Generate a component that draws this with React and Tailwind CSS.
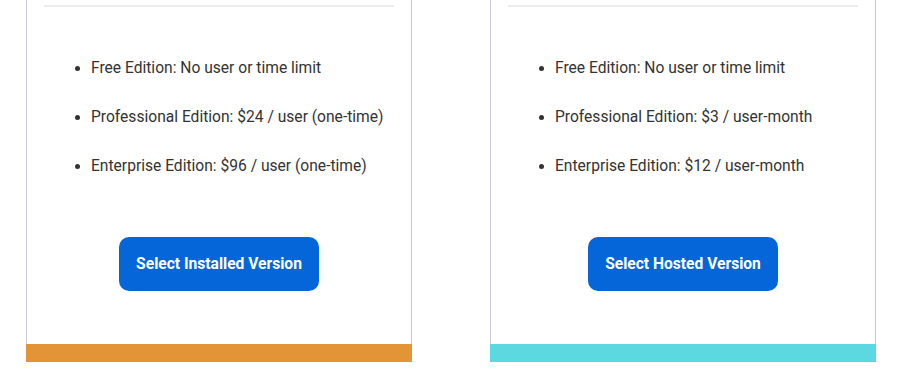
import React from 'react';

const plans = [
  {
    items: [
      'Free Edition: No user or time limit',
      'Professional Edition: $24 / user (one-time)',
      'Enterprise Edition: $96 / user (one-time)',
    ],
    button: 'Select Installed Version',
    bar: 'bg-[#e39437]',
  },
  {
    items: [
      'Free Edition: No user or time limit',
      'Professional Edition: $3 / user-month',
      'Enterprise Edition: $12 / user-month',
    ],
    button: 'Select Hosted Version',
    bar: 'bg-[#5cd9e0]',
  },
];

const PlanCard = ({ plan }) => (
  <div className="w-[386px] flex flex-col">
    <div className="border-x border-[#c9c9d6] bg-white pt-[5px] px-[17px]">
      <div className="h-[2px] bg-[#ececec]" />
      <ul className="list-disc pl-[47px] pt-[49px] text-[15.6px] leading-[24px] text-[#333] flex flex-col gap-[25px]">
        {plan.items.map((item) => (
          <li key={item}>{item}</li>
        ))}
      </ul>
      <div className="flex justify-center pt-[59px] pb-[53px]">
        <button className="h-[54px] px-[17px] pt-[2px] rounded-[10px] bg-[#0466d8] text-white text-[15.6px] font-bold">
          {plan.button}
        </button>
      </div>
    </div>
    <div className={`h-[18px] ${plan.bar}`} />
  </div>
);

const App = () => {
  return (
    <div className="w-[900px] h-[388px] bg-white pl-[26px] flex gap-[78px] font-['Roboto',sans-serif]">
      {plans.map((plan) => (
        <PlanCard key={plan.button} plan={plan} />
      ))}
    </div>
  );
};

export default App;
